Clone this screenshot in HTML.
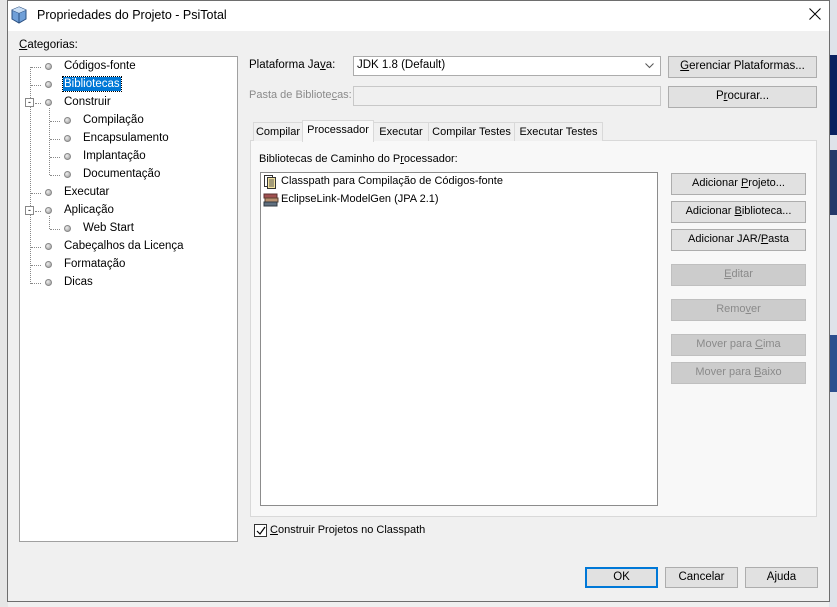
<!DOCTYPE html>
<html><head><meta charset="utf-8"><style>
*{box-sizing:border-box;margin:0;padding:0}
body{width:837px;height:607px;position:relative;overflow:hidden;background:#f0f0f0;font-family:"Liberation Sans",sans-serif;font-size:11.5px;color:#000}
.a{position:absolute;white-space:nowrap}
.btn{position:absolute;background:#e1e1e1;border:1px solid #adadad;text-align:center;line-height:19px;white-space:nowrap}
.dis{color:#8a8a8a;background:#cccccc;border-color:#bfbfbf}
.tab{position:absolute;top:122px;height:19px;border:1px solid #d9d9d9;border-bottom:none;background:#f0f0f0;text-align:center;line-height:18px;white-space:nowrap;font-size:11px}
.b{position:absolute;width:7px;height:7px;border-radius:50%;background:radial-gradient(circle at 35% 35%,#eee,#999);border:1px solid #888}
.dh{position:absolute;border-top:1px dotted #888;width:10px}
.dv{position:absolute;border-left:1px dotted #888}
u{text-decoration:underline}
</style></head><body>
<div class="a" style="left:0;top:0;width:8px;height:607px;background:#e6e6e6"></div>
<div class="a" style="left:829px;top:0;width:8px;height:607px;background:#dfe3ea"></div>
<div class="a" style="left:830px;top:55px;width:7px;height:80px;background:#0b2260"></div>
<div class="a" style="left:830px;top:150px;width:7px;height:65px;background:#23396a"></div>
<div class="a" style="left:830px;top:335px;width:7px;height:57px;background:#2c4f8e"></div>
<div class="a" style="left:7px;top:0;width:823px;height:602px;background:#f0f0f0;border:1px solid #6e6e6e"></div>
<div class="a" style="left:8px;top:1px;width:821px;height:30px;background:#fff"></div>
<svg class="a" style="left:11px;top:6px" width="16" height="18" viewBox="0 0 16 18"><path d="M8 1 L15 4 L15 13 L8 17 L1 13 L1 4 Z" fill="#6f9fd8" stroke="#2a4f80"/><path d="M1 4 L8 7 L15 4 M8 7 L8 17" fill="none" stroke="#2a4f80"/><path d="M8 1 L15 4 L8 7 L1 4Z" fill="#c9def5"/></svg>
<div class="a" style="left:37px;top:8px;font-size:12.5px">Propriedades do Projeto - PsiTotal</div>
<svg class="a" style="left:809px;top:8px" width="12" height="12"><path d="M0.5 0.5L11.5 11.5M11.5 0.5L0.5 11.5" stroke="#000" stroke-width="1"/></svg>
<div class="a" style="left:19px;top:39px"><u>C</u>ategorias:</div>
<div class="a" style="left:19px;top:56px;width:219px;height:486px;background:#fff;border:1px solid #a0a0a0"></div>
<div class="dv" style="left:30px;top:67px;height:217px"></div>
<div class="dv" style="left:49px;top:108px;height:67px"></div>
<div class="dv" style="left:49px;top:216px;height:13px"></div>
<div class="a" style="left:25px;top:98px;width:9px;height:9px;border:1px solid #888;background:#fff;font-size:9px;line-height:6px;text-align:center">-</div>
<div class="a" style="left:25px;top:206px;width:9px;height:9px;border:1px solid #888;background:#fff;font-size:9px;line-height:6px;text-align:center">-</div>
<div class="dh" style="left:31px;top:67px"></div><div class="b" style="left:45px;top:63px"></div><div class="a" style="left:64px;top:60px">Códigos-fonte</div>
<div class="dh" style="left:31px;top:85px"></div><div class="b" style="left:45px;top:81px"></div><div class="a" style="left:63px;top:77px;background:#0078d7;color:#fff;padding:1px 1px;outline:1px dotted #000">Bibliotecas</div>
<div class="dh" style="left:35px;top:103px;width:6px"></div><div class="b" style="left:45px;top:99px"></div><div class="a" style="left:64px;top:96px">Construir</div>
<div class="dh" style="left:50px;top:121px"></div><div class="b" style="left:64px;top:117px"></div><div class="a" style="left:83px;top:114px">Compilação</div>
<div class="dh" style="left:50px;top:139px"></div><div class="b" style="left:64px;top:135px"></div><div class="a" style="left:83px;top:132px">Encapsulamento</div>
<div class="dh" style="left:50px;top:157px"></div><div class="b" style="left:64px;top:153px"></div><div class="a" style="left:83px;top:150px">Implantação</div>
<div class="dh" style="left:50px;top:175px"></div><div class="b" style="left:64px;top:171px"></div><div class="a" style="left:83px;top:168px">Documentação</div>
<div class="dh" style="left:31px;top:193px"></div><div class="b" style="left:45px;top:189px"></div><div class="a" style="left:64px;top:186px">Executar</div>
<div class="dh" style="left:35px;top:211px;width:6px"></div><div class="b" style="left:45px;top:207px"></div><div class="a" style="left:64px;top:204px">Aplicação</div>
<div class="dh" style="left:50px;top:229px"></div><div class="b" style="left:64px;top:225px"></div><div class="a" style="left:83px;top:222px">Web Start</div>
<div class="dh" style="left:31px;top:247px"></div><div class="b" style="left:45px;top:243px"></div><div class="a" style="left:64px;top:240px">Cabeçalhos da Licença</div>
<div class="dh" style="left:31px;top:265px"></div><div class="b" style="left:45px;top:261px"></div><div class="a" style="left:64px;top:258px">Formatação</div>
<div class="dh" style="left:31px;top:283px"></div><div class="b" style="left:45px;top:279px"></div><div class="a" style="left:64px;top:276px">Dicas</div>

<div class="a" style="left:249px;top:59px">Plataforma Ja<u>v</u>a:</div>
<div class="a" style="left:353px;top:56px;width:308px;height:20px;background:#fff;border:1px solid #acacac;padding:2px 0 0 3px">JDK 1.8 (Default)<svg style="position:absolute;right:6px;top:6px" width="9" height="6"><path d="M0.5 0.5L4.5 4.5L8.5 0.5" fill="none" stroke="#555"/></svg></div>
<div class="btn" style="left:668px;top:56px;width:149px;height:22px"><u>G</u>erenciar Plataformas...</div>
<div class="a" style="left:249px;top:89px;color:#8a8a8a;font-size:11px">Pasta de Bibliote<u>c</u>as:</div>
<div class="a" style="left:353px;top:86px;width:308px;height:20px;background:#f0f0f0;border:1px solid #c8c8c8"></div>
<div class="btn" style="left:668px;top:86px;width:149px;height:22px">P<u>r</u>ocurar...</div>

<div class="a" style="left:250px;top:140px;width:567px;height:377px;background:#f8f8f8;border:1px solid #d9d9d9"></div>
<div class="tab" style="left:253px;width:50px">Compilar</div>
<div class="tab" style="left:302px;top:120px;height:22px;width:72px;background:#f8f8f8;line-height:18px">Processador</div>
<div class="tab" style="left:373px;width:56px">Executar</div>
<div class="tab" style="left:428px;width:87px">Compilar Testes</div>
<div class="tab" style="left:514px;width:89px">Executar Testes</div>
<div class="a" style="left:259px;top:153px;font-size:11px">Bibliotecas de Caminho do P<u>r</u>ocessador:</div>
<div class="a" style="left:260px;top:172px;width:398px;height:334px;background:#fff;border:1px solid #8c8c8c"></div>
<svg class="a" style="left:264px;top:175px" width="13" height="14"><rect x="0.5" y="0.5" width="8" height="11" fill="#fff" stroke="#333"/><rect x="3.5" y="2.5" width="8" height="11" fill="#f3e3a0" stroke="#333"/><path d="M5 5h5M5 7h5M5 9h5M5 11h5" stroke="#555"/></svg>
<div class="a" style="left:281px;top:175px;font-size:11px">Classpath para Compilação de Códigos-fonte</div>
<svg class="a" style="left:263px;top:193px" width="16" height="14"><rect x="1" y="1" width="13" height="4" fill="#a05050" stroke="#5a3030"/><rect x="2" y="5" width="13" height="4" fill="#b89070" stroke="#5a4030"/><rect x="1" y="9" width="13" height="4" fill="#607080" stroke="#303840"/></svg>
<div class="a" style="left:281px;top:193px;font-size:11px">EclipseLink-ModelGen (JPA 2.1)</div>
<div class="btn" style="left:671px;top:173px;width:135px;height:22px;font-size:11px">Adicionar <u>P</u>rojeto...</div>
<div class="btn" style="left:671px;top:201px;width:135px;height:22px;font-size:11px">Adicionar <u>B</u>iblioteca...</div>
<div class="btn" style="left:671px;top:229px;width:135px;height:22px;font-size:11px">Adicionar JAR/<u>P</u>asta</div>
<div class="btn dis" style="left:671px;top:264px;width:135px;height:22px;font-size:11px"><u>E</u>ditar</div>
<div class="btn dis" style="left:671px;top:299px;width:135px;height:22px;font-size:11px">Remo<u>v</u>er</div>
<div class="btn dis" style="left:671px;top:334px;width:135px;height:22px;font-size:11px">Mover para <u>C</u>ima</div>
<div class="btn dis" style="left:671px;top:362px;width:135px;height:22px;font-size:11px">Mover para <u>B</u>aixo</div>

<div class="a" style="left:254px;top:524px;width:13px;height:13px;border:1px solid #333;background:#fff"><svg style="position:absolute;left:1px;top:1px" width="10" height="10"><path d="M1 5L4 8L9 1" fill="none" stroke="#000" stroke-width="1.2"/></svg></div>
<div class="a" style="left:270px;top:524px;font-size:11px"><u>C</u>onstruir Projetos no Classpath</div>

<div class="btn" style="left:585px;top:567px;width:73px;height:21px;border:2px solid #0078d7;line-height:17px">OK</div>
<div class="btn" style="left:665px;top:567px;width:73px;height:21px">Cancelar</div>
<div class="btn" style="left:745px;top:567px;width:73px;height:21px">A<u>j</u>uda</div>
</body></html>
